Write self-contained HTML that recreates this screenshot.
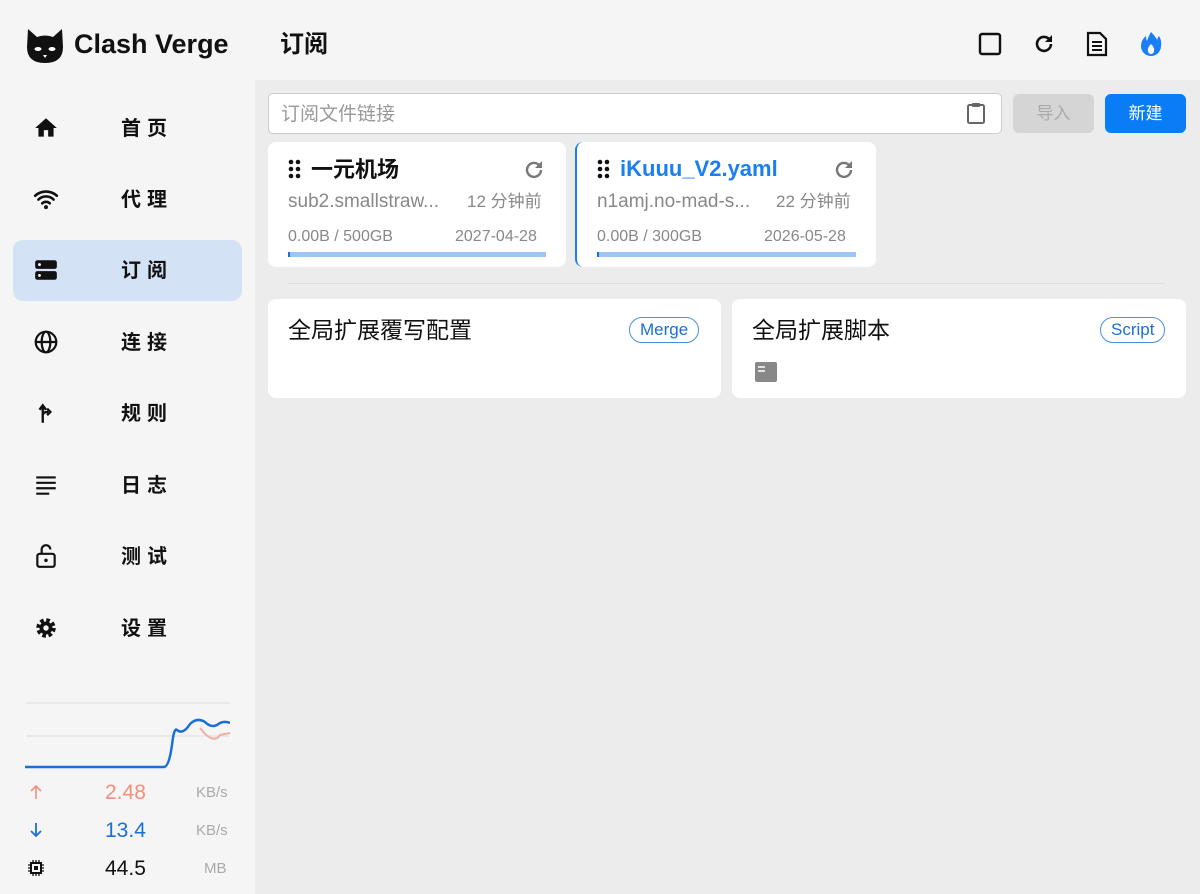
<!DOCTYPE html>
<html><head><meta charset="utf-8"><style>
*{margin:0;padding:0;box-sizing:border-box}
body{width:1200px;height:894px;overflow:hidden;font-family:"Liberation Sans","Noto Sans CJK SC",sans-serif;background:#ececec;position:relative;line-height:1}
.side{position:absolute;left:0;top:0;width:255px;height:894px;background:#f5f5f5}
.hdr{position:absolute;left:255px;top:0;width:945px;height:80px;background:#f5f5f5}
.abs{position:absolute;white-space:nowrap}
.nav{position:absolute;left:13px;width:229px;height:61px;border-radius:10px}
.nav .t{position:absolute;left:108px;top:21px;font-size:20px;font-weight:bold;letter-spacing:6px;color:#111}
.nav svg{position:absolute;left:20px;top:17px}
.card{position:absolute;background:#fff;border-radius:8px}
.g{color:#888}
</style></head><body>
<div class="side">
 <svg class="abs" style="left:25px;top:27px" width="40" height="38" viewBox="0 0 40 38"><path d="M3 2 L12 10 Q20 7 28 10 L37 2 L38 20 Q38 36 20 36 Q2 36 2 20 Z" fill="#111"/><ellipse cx="13" cy="22" rx="3.5" ry="2" fill="#fff"/><ellipse cx="27" cy="22" rx="3.5" ry="2" fill="#fff"/><path d="M18 28 L22 28 L20 31Z" fill="#fff"/></svg>
 <div class="abs" style="left:74px;top:31px;font-size:27px;font-weight:bold;color:#111">Clash Verge</div>
 <div class="nav" style="top:98px"><svg width="26" height="26" viewBox="0 0 24 24"><path d="M10 20v-6h4v6h5v-8h3L12 3 2 12h3v8z" fill="#111"/></svg><span class="t">首页</span></div>
 <div class="nav" style="top:169px"><svg width="26" height="26" viewBox="0 0 24 24"><path d="M2 9a15 15 0 0 1 20 0M5 12.5a10 10 0 0 1 14 0M8.5 16a5 5 0 0 1 7 0" stroke="#111" stroke-width="2.4" fill="none" stroke-linecap="round"/><circle cx="12" cy="19.5" r="1.8" fill="#111"/></svg><span class="t">代理</span></div>
 <div class="nav" style="top:240px;background:#d3e3f5"><svg width="26" height="26" viewBox="0 0 24 24"><rect x="2" y="3" width="20" height="8" rx="2" fill="#111"/><rect x="2" y="13" width="20" height="8" rx="2" fill="#111"/><circle cx="6" cy="7" r="1.3" fill="#fff"/><circle cx="6" cy="17" r="1.3" fill="#fff"/></svg><span class="t">订阅</span></div>
 <div class="nav" style="top:312px"><svg width="26" height="26" viewBox="0 0 24 24"><circle cx="12" cy="12" r="9.5" stroke="#111" stroke-width="2" fill="none"/><ellipse cx="12" cy="12" rx="4" ry="9.5" stroke="#111" stroke-width="2" fill="none"/><path d="M2.5 12h19" stroke="#111" stroke-width="2"/></svg><span class="t">连接</span></div>
 <div class="nav" style="top:383px"><svg width="26" height="26" viewBox="0 0 24 24"><path d="M9 21V6M6 9l3-4 3 4M9 14q0-3 5-3M13 8l3 3-3 3" stroke="#111" stroke-width="2.2" fill="none"/></svg><span class="t">规则</span></div>
 <div class="nav" style="top:455px"><svg width="26" height="26" viewBox="0 0 24 24"><path d="M3 5h18M3 10h18M3 15h18M3 20h12" stroke="#111" stroke-width="2"/></svg><span class="t">日志</span></div>
 <div class="nav" style="top:526px"><svg width="26" height="26" viewBox="0 0 24 24"><rect x="4" y="10" width="16" height="12" rx="2" stroke="#111" stroke-width="2" fill="none"/><path d="M8 10V6a4 4 0 0 1 8 0" stroke="#111" stroke-width="2" fill="none"/><circle cx="12" cy="16" r="1.6" fill="#111"/></svg><span class="t">测试</span></div>
 <div class="nav" style="top:598px"><svg width="26" height="26" viewBox="0 0 24 24"><circle cx="12" cy="12" r="7" fill="none" stroke="#111" stroke-width="4" stroke-dasharray="3.2 2.3"/><circle cx="12" cy="12" r="6" fill="#111"/><circle cx="12" cy="12" r="2.5" fill="#f5f5f5"/></svg><span class="t">设置</span></div>
 <svg class="abs" style="left:25px;top:700px" width="205" height="70"><path d="M1 3H205M1 36H205" stroke="#ddd"/><path d="M175 28 Q188 45 195 35 L205 33" stroke="#f0b0a0" stroke-width="2" fill="none"/><path d="M0 67H139 Q144 67 147 45 Q149 27 152 30 Q158 35 165 24 Q172 17 180 22 Q186 28 192 25 Q198 20 205 23" stroke="#1a6fd6" stroke-width="2.5" fill="none"/></svg>
 <svg class="abs" style="left:28px;top:784px" width="16" height="16" viewBox="0 0 16 16"><path d="M8 15V2M3 7l5-5 5 5" stroke="#f0907a" stroke-width="1.6" fill="none"/></svg>
 <div class="abs" style="left:105px;top:782px;color:#f0907a;font-size:21px">2.48</div>
 <div class="abs" style="left:196px;top:785px;font-size:15px;color:#aaa">KB/s</div>
 <svg class="abs" style="left:28px;top:822px" width="16" height="16" viewBox="0 0 16 16"><path d="M8 1v13M3 9l5 5 5-5" stroke="#1a6fd6" stroke-width="1.8" fill="none"/></svg>
 <div class="abs" style="left:105px;top:820px;color:#1a6fd6;font-size:21px">13.4</div>
 <div class="abs" style="left:196px;top:823px;font-size:15px;color:#aaa">KB/s</div>
 <svg class="abs" style="left:28px;top:860px" width="16" height="16" viewBox="0 0 16 16"><rect x="3" y="3" width="10" height="10" stroke="#111" stroke-width="2" fill="none"/><rect x="6" y="6" width="4" height="4" fill="#111"/><path d="M5 0v3M8 0v3M11 0v3M5 13v3M8 13v3M11 13v3M0 5h3M0 8h3M0 11h3M13 5h3M13 8h3M13 11h3" stroke="#111" stroke-width="1.3"/></svg>
 <div class="abs" style="left:105px;top:858px;color:#111;font-size:21px">44.5</div>
 <div class="abs" style="left:204px;top:861px;font-size:15px;color:#aaa">MB</div>
</div>
<div class="hdr">
 <div class="abs" style="left:25px;top:33px;font-size:24px;font-weight:bold;color:#111">订阅</div>
 <svg class="abs" style="left:723px;top:32px" width="24" height="24"><rect x="2" y="2" width="20" height="20" rx="2" stroke="#111" stroke-width="2.4" fill="none"/></svg>
 <svg class="abs" style="left:777px;top:32px" width="24" height="24" viewBox="0 0 24 24"><path d="M19 12a7 7 0 1 1-2-5" stroke="#111" stroke-width="2.6" fill="none"/><path d="M20 3v7h-7z" fill="#111"/></svg>
 <svg class="abs" style="left:830px;top:31px" width="24" height="26" viewBox="0 0 24 26"><path d="M3 2h12l6 6v16H3z" stroke="#111" stroke-width="2.2" fill="none"/><path d="M7 11h10M7 15h10M7 19h10" stroke="#111" stroke-width="2"/></svg>
 <svg class="abs" style="left:884px;top:31px" width="24" height="26" viewBox="0 0 24 26"><path d="M12 1 Q17 6 18 9 Q19 6 20 5 Q23 10 22 15 A10 10 0 0 1 2 15 Q2 9 7 5 Q7 8 8 10 Q10 4 12 1Z" fill="#1a7ef5"/><path d="M12 13 Q16 17 15 20 A3 3 0 0 1 9 20 Q8 17 12 13Z" fill="#fff"/></svg>
</div>
<div class="abs" style="left:268px;top:93px;width:734px;height:41px;background:#fff;border:1px solid #ccc;border-radius:5px"><span class="abs" style="left:12px;top:11px;font-size:19px;color:#999">订阅文件链接</span>
<svg class="abs" style="left:697px;top:8px" width="20" height="22" viewBox="0 0 20 22"><rect x="2" y="3" width="16" height="18" rx="1.5" stroke="#666" stroke-width="2" fill="none"/><rect x="6" y="1" width="8" height="4" rx="1" fill="#666"/></svg></div>
<div class="abs" style="left:1013px;top:94px;width:81px;height:39px;background:#d5d5d5;border-radius:6px;color:#aaa;font-size:17px;text-align:center;line-height:39px">导入</div>
<div class="abs" style="left:1105px;top:94px;width:81px;height:39px;background:#0a7cf5;border-radius:6px;color:#fff;font-size:17px;text-align:center;line-height:39px">新建</div>

<div class="card" style="left:268px;top:142px;width:298px;height:125px">
 <svg class="abs" style="left:20px;top:17px" width="14" height="20"><g fill="#111"><circle cx="3" cy="3" r="2.3"/><circle cx="10" cy="3" r="2.3"/><circle cx="3" cy="10" r="2.3"/><circle cx="10" cy="10" r="2.3"/><circle cx="3" cy="17" r="2.3"/><circle cx="10" cy="17" r="2.3"/></g></svg>
 <div class="abs" style="left:43px;top:17px;font-size:22px;font-weight:bold;color:#111">一元机场</div>
 <svg class="abs" style="left:254px;top:16px" width="24" height="24" viewBox="0 0 24 24"><path d="M19 12a7 7 0 1 1-2-5" stroke="#777" stroke-width="2.4" fill="none"/><path d="M20 3v7h-7z" fill="#777"/></svg>
 <div class="abs g" style="left:20px;top:50px;font-size:19px">sub2.smallstraw...</div>
 <div class="abs g" style="left:199px;top:51px;font-size:17px">12 分钟前</div>
 <div class="abs g" style="left:20px;top:87px;font-size:16px">0.00B / 500GB</div>
 <div class="abs g" style="left:187px;top:87px;font-size:16px">2027-04-28</div>
 <div class="abs" style="left:20px;top:110px;width:258px;height:5px;background:#9cc5f3;border-left:2px solid #1a6fd6"></div>
</div>
<div class="card" style="left:575px;top:142px;width:301px;height:125px;border-left:2px solid #1a7ef5">
 <svg class="abs" style="left:20px;top:17px" width="14" height="20"><g fill="#111"><circle cx="3" cy="3" r="2.3"/><circle cx="10" cy="3" r="2.3"/><circle cx="3" cy="10" r="2.3"/><circle cx="10" cy="10" r="2.3"/><circle cx="3" cy="17" r="2.3"/><circle cx="10" cy="17" r="2.3"/></g></svg>
 <div class="abs" style="left:43px;top:16px;font-size:22px;font-weight:bold;color:#1a7ef5">iKuuu_V2.yaml</div>
 <svg class="abs" style="left:255px;top:16px" width="24" height="24" viewBox="0 0 24 24"><path d="M19 12a7 7 0 1 1-2-5" stroke="#777" stroke-width="2.4" fill="none"/><path d="M20 3v7h-7z" fill="#777"/></svg>
 <div class="abs g" style="left:20px;top:50px;font-size:19px">n1amj.no-mad-s...</div>
 <div class="abs g" style="left:199px;top:51px;font-size:17px">22 分钟前</div>
 <div class="abs g" style="left:20px;top:87px;font-size:16px">0.00B / 300GB</div>
 <div class="abs g" style="left:187px;top:87px;font-size:16px">2026-05-28</div>
 <div class="abs" style="left:20px;top:110px;width:259px;height:5px;background:#9cc5f3;border-left:2px solid #1a6fd6"></div>
</div>
<div class="abs" style="left:288px;top:283px;width:877px;height:1px;background:#ddd"></div>
<div class="card" style="left:268px;top:299px;width:453px;height:99px">
 <div class="abs" style="left:20px;top:20px;font-size:23px;color:#111">全局扩展覆写配置</div>
 <div class="abs" style="left:361px;top:18px;padding:0 10px;height:26px;line-height:24px;border:1px solid #4a90e2;border-radius:13px;color:#1a6fd6;font-size:17px">Merge</div>
</div>
<div class="card" style="left:732px;top:299px;width:454px;height:99px">
 <div class="abs" style="left:20px;top:20px;font-size:23px;color:#111">全局扩展脚本</div>
 <div class="abs" style="left:368px;top:18px;padding:0 10px;height:26px;line-height:24px;border:1px solid #4a90e2;border-radius:13px;color:#1a6fd6;font-size:17px">Script</div>
 <svg class="abs" style="left:23px;top:63px" width="22" height="20"><rect x="0" y="0" width="22" height="20" rx="2" fill="#888"/><path d="M3 5h7M3 9h7" stroke="#fff" stroke-width="1.5"/></svg>
</div>
</body></html>
